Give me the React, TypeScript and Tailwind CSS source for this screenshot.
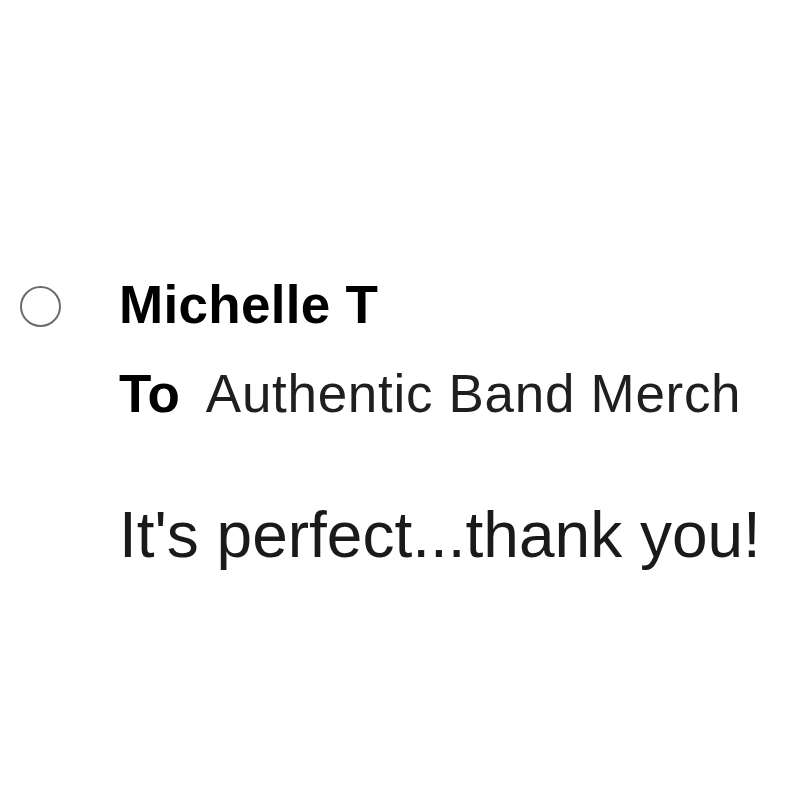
export default function App() {
  return (
    <div className="w-[800px] h-[800px] bg-white font-['Liberation_Sans',Arial,sans-serif] text-[#111]">
      <div className="flex items-start pt-[275px] pl-[20px]">
        {/* Radio / unread indicator */}
        <div className="mt-[11px] w-[41px] h-[41px] shrink-0 rounded-full border-2 border-[#6b6b6b]" />
        <div className="ml-[58px] flex flex-col">
          <h1 className="text-[53px] leading-[60px] font-bold text-black tracking-[0.3px]">Michelle T</h1>
          <p className="mt-[29px] text-[53px] leading-[60px] flex">
            <span className="font-bold text-black">To</span>
            <span className="ml-[26px] text-[#1f1f1f] tracking-[0.7px]">Authentic Band Merch</span>
          </p>
          <p className="mt-[75px] text-[64px] leading-[72px] text-[#1a1a1a] whitespace-nowrap">
            It's perfect...thank you!
          </p>
        </div>
      </div>
    </div>
  );
}
